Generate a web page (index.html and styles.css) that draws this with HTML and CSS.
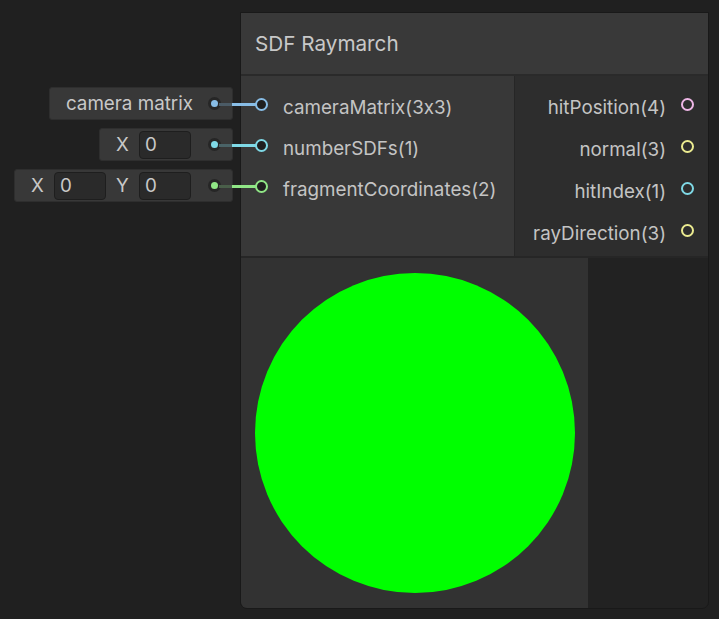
FILE: index.html
```html
<!DOCTYPE html>
<html>
<head>
<meta charset="utf-8">
<link rel="stylesheet" href="styles.css">
</head>
<body>
<div class="canvas">
  <div class="node">
    <div class="fields">
      <div class="field f-blue">
        <span class="field-text">camera matrix</span>
        <span class="dot"></span>
      </div>
      <div class="field f-cyan">
        <span class="axis">X</span>
        <span class="num">0</span>
        <span class="dot"></span>
      </div>
      <div class="field f-green">
        <span class="axis">X</span>
        <span class="num">0</span>
        <span class="axis">Y</span>
        <span class="num">0</span>
        <span class="dot"></span>
      </div>
    </div>
    <div class="header">SDF Raymarch</div>
    <div class="body">
      <div class="inputs">
        <div class="port in c-blue"><span class="ring"></span><span class="label">cameraMatrix(3x3)</span></div>
        <div class="port in c-cyan"><span class="ring"></span><span class="label">numberSDFs(1)</span></div>
        <div class="port in c-green"><span class="ring"></span><span class="label">fragmentCoordinates(2)</span></div>
      </div>
      <div class="outputs">
        <div class="port out c-pink"><span class="label">hitPosition(4)</span><span class="ring"></span></div>
        <div class="port out c-yellow"><span class="label">normal(3)</span><span class="ring"></span></div>
        <div class="port out c-cyan"><span class="label">hitIndex(1)</span><span class="ring"></span></div>
        <div class="port out c-yellow"><span class="label">rayDirection(3)</span><span class="ring"></span></div>
      </div>
    </div>
    <div class="lower">
      <div class="preview"><div class="sphere"></div></div>
    </div>
  </div>
</div>
</body>
</html>
```
FILE: styles.css
```css
html, body {
  margin: 0;
  padding: 0;
  background: #202020;
}
body {
  font-family: Inter, "Noto Sans", sans-serif;
  font-feature-settings: "calt" 0;
  color: #c4c4c4;
  width: 719px;
  height: 619px;
  overflow: hidden;
}
.canvas {
  position: relative;
  width: 719px;
  height: 619px;
}
.node {
  position: absolute;
  left: 240px;
  top: 12px;
  width: 469px;
  height: 597px;
  box-sizing: border-box;
  border: 1px solid #191919;
  border-radius: 0 0 7px 7px;
  background: #222222;
  display: flex;
  flex-direction: column;
}
.header {
  height: 61px;
  border-bottom: 2px solid #2a2a2a;
  background: #393939;
  display: flex;
  align-items: center;
  padding-left: 14px;
  font-size: 20.7px;
  color: #c8c8c8;
}
.body {
  height: 180px;
  display: flex;
  border-bottom: 2px solid #262626;
}
.inputs {
  width: 274px;
  background: #383838;
  border-right: 1px solid #262626;
  padding-top: 8px;
  box-sizing: border-box;
}
.outputs {
  flex: 1;
  background: #2d2d2d;
  padding-top: 7px;
  display: flex;
  flex-direction: column;
  align-items: flex-end;
}
.port {
  position: relative;
  display: flex;
  align-items: center;
  font-size: 18.8px;
  color: #c4c4c4;
}
.port.in {
  height: 41px;
  padding-left: 14px;
  gap: 15px;
}
.port.out {
  height: 42px;
  padding-right: 14px;
  gap: 15px;
}
.ring {
  position: relative;
  z-index: 2;
  width: 13px;
  height: 13px;
  box-sizing: border-box;
  border-radius: 50%;
  border: 2px solid currentColor;
  background: #1f1f1f;
  flex: none;
}
.out .ring {
  background: transparent;
}
.label {
  color: #c4c4c4;
  padding-top: 6px;
}
.port.in::before {
  content: "";
  position: absolute;
  left: -22px;
  width: 37px;
  top: 50%;
  height: 3px;
  margin-top: -1.5px;
  z-index: 1;
}
.c-blue { color: #88bde6; }
.c-cyan { color: #7fd9e6; }
.c-green { color: #90e686; }
.c-pink { color: #eeb6e6; }
.c-yellow { color: #ebeb90; }
.c-blue::before { background: linear-gradient(to right, #4b5b66 0 13px, #88bde6 13px); }
.c-cyan::before { background: linear-gradient(to right, #4a6367 0 13px, #7fd9e6 13px); }
.c-green::before { background: linear-gradient(to right, #4a5f4a 0 13px, #90e686 13px); }

.fields {
  position: absolute;
  right: calc(100% + 8px);
  top: 74px;
  display: flex;
  flex-direction: column;
  align-items: flex-end;
  gap: 8px;
}
.field {
  height: 33px;
  box-sizing: border-box;
  background: #383838;
  border: 1px solid #2e2e2e;
  border-radius: 3px;
  display: flex;
  align-items: center;
  padding-left: 16px;
  padding-right: 11px;
  font-size: 18.8px;
  color: #c8c8c8;
}
.field-text {
  margin-right: 15px;
}
.axis {
  width: 11px;
  text-align: center;
  margin-right: 12px;
}
.num {
  width: 52px;
  height: 28px;
  box-sizing: border-box;
  background: #2a2a2a;
  border: 1px solid #1e1e1e;
  border-radius: 4px;
  padding-left: 5px;
  display: flex;
  align-items: center;
  margin-right: 10px;
}
.num + .dot {
  margin-left: 7px;
}
.dot {
  width: 13px;
  height: 13px;
  box-sizing: border-box;
  border-radius: 50%;
  background: #262626;
  display: flex;
  align-items: center;
  justify-content: center;
  flex: none;
}
.dot::after {
  content: "";
  width: 7px;
  height: 7px;
  border-radius: 50%;
}
.f-blue .dot::after { background: #88bde6; }
.f-cyan .dot::after { background: #7fd9e6; }
.f-green .dot::after { background: #90e686; }

.lower {
  flex: 1;
  display: flex;
}
.preview {
  width: 347px;
  height: 350px;
  background: #323232;
  display: flex;
  align-items: center;
  justify-content: center;
  border-bottom-left-radius: 6px;
}
.sphere {
  width: 320px;
  height: 320px;
  border-radius: 50%;
  background: #00ff00;
}
```
